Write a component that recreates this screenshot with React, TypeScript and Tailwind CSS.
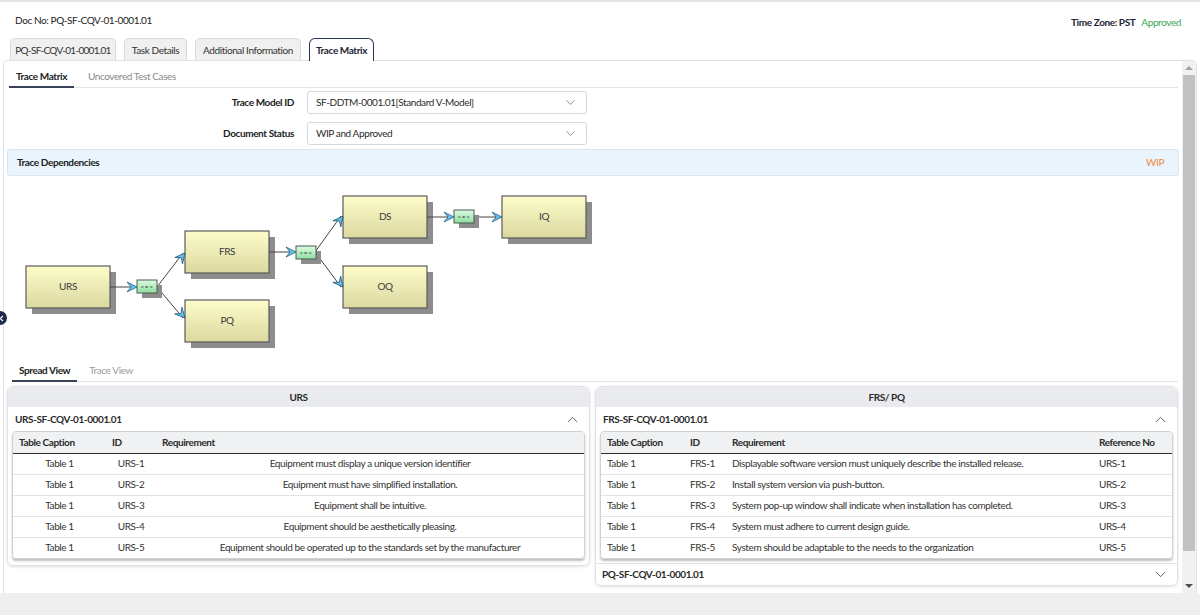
import React from 'react';
import { ChevronDown, ChevronUp, ChevronLeft } from 'lucide-react';

const font = { fontFamily: 'Lato, "Liberation Sans", sans-serif' };

const Arrow: React.FC<{ x1: number; y1: number; x2: number; y2: number }> = ({ x1, y1, x2, y2 }) => {
    const angle = (Math.atan2(y2 - y1, x2 - x1) * 180) / Math.PI;
    return (
        <g>
            <line x1={x1} y1={y1} x2={x2 - 2} y2={y2} stroke="#444" strokeWidth="1" />
            <polygon
                points={`${x2},${y2} ${x2 - 10},${y2 - 5} ${x2 - 6},${y2} ${x2 - 10},${y2 + 5}`}
                fill="#5ec4ee"
                stroke="#1f4e6e"
                strokeWidth="0.7"
                transform={`rotate(${angle} ${x2} ${y2})`}
            />
        </g>
    );
};

const Node: React.FC<{ x: number; y: number; label: string }> = ({ x, y, label }) => (
    <g>
        <rect x={x + 6} y={y + 6} width={84} height={42} fill="#8d8d8d" />
        <rect x={x} y={y} width={84} height={42} fill="url(#nodeFill)" stroke="#5b5b5b" strokeWidth="1.2" />
        <text x={x + 42} y={y + 24} textAnchor="middle" fontSize="10" fill="#3a3a3a" style={font}>
            {label}
        </text>
    </g>
);

const Link: React.FC<{ x: number; y: number }> = ({ x, y }) => (
    <g>
        <rect x={x + 5} y={y + 5} width={20} height={13} fill="#8d8d8d" />
        <rect x={x} y={y} width={20} height={13} fill="url(#linkFill)" stroke="#4b5b50" strokeWidth="1" />
        <text x={x + 10} y={y + 9} textAnchor="middle" fontSize="6.5" fill="#333" letterSpacing="0.6" style={font}>
            {'<=>'}
        </text>
    </g>
);

const TraceDiagram = () => (
    <svg width="600" height="184" viewBox="4 176 600 184" className="block">
        <defs>
            <linearGradient id="nodeFill" x1="0" y1="0" x2="0" y2="1">
                <stop offset="0" stopColor="#fdfdcb" />
                <stop offset="1" stopColor="#dbd8a0" />
            </linearGradient>
            <linearGradient id="linkFill" x1="0" y1="0" x2="0" y2="1">
                <stop offset="0" stopColor="#dcfbe3" />
                <stop offset="1" stopColor="#8fdfa0" />
            </linearGradient>
        </defs>
        <Node x={26} y={266} label="URS" />
        <Node x={185} y={231} label="FRS" />
        <Node x={185} y={300} label="PQ" />
        <Node x={343} y={196} label="DS" />
        <Node x={343} y={266} label="OQ" />
        <Node x={502} y={196} label="IQ" />
        <Arrow x1={110} y1={287} x2={137} y2={287} />
        <Arrow x1={157} y1={287} x2={185} y2={253} />
        <Arrow x1={157} y1={287} x2={185} y2={318} />
        <Arrow x1={269} y1={252} x2={296} y2={252} />
        <Arrow x1={315} y1={252} x2={343} y2={216} />
        <Arrow x1={315} y1={252} x2={343} y2={287} />
        <Arrow x1={427} y1={217} x2={454} y2={217} />
        <Arrow x1={474} y1={217} x2={502} y2={217} />
        <Link x={137} y={280} />
        <Link x={296} y={246} />
        <Link x={454} y={210} />
    </svg>
);

const urs = [
    ['URS-1', 'Equipment must display a unique version identifier'],
    ['URS-2', 'Equipment must have simplified installation.'],
    ['URS-3', 'Equipment shall be intuitive.'],
    ['URS-4', 'Equipment should be aesthetically pleasing.'],
    ['URS-5', 'Equipment should be operated up to the standards set by the manufacturer'],
];

const frs = [
    ['FRS-1', 'Displayable software version must uniquely describe the installed release.', 'URS-1'],
    ['FRS-2', 'Install system version via push-button.', 'URS-2'],
    ['FRS-3', 'System pop-up window shall indicate when installation has completed.', 'URS-3'],
    ['FRS-4', 'System must adhere to current design guide.', 'URS-4'],
    ['FRS-5', 'System should be adaptable to the needs to the organization', 'URS-5'],
];

const PanelHeader: React.FC<{ title: string }> = ({ title }) => (
    <div className="h-[20px] bg-[#e9ebee] flex items-center justify-center font-bold text-[#2b2b2b] rounded-t-[6px]">{title}</div>
);

const SectionRow: React.FC<{ title: string; open?: boolean; bordered?: boolean }> = ({ title, open, bordered }) => (
    <div className={`flex items-center justify-between pr-[8px] ${bordered ? 'border-t border-[#e3e3e3] h-[22px] pl-[6px]' : 'h-[24px] pl-[7px]'}`}>
        <span className="font-bold text-[#2b2b2b]">{title}</span>
        {open ? <ChevronUp size={17} strokeWidth={1.2} className="text-[#444]" /> : <ChevronDown size={17} strokeWidth={1.2} className="text-[#444]" />}
    </div>
);

const UrsTable = () => (
    <div className="mx-[4px] border border-[#cfd2d6] rounded-[4px] shadow-[0_2px_2px_rgba(0,0,0,0.25)] overflow-hidden">
        <table className="w-full border-collapse table-fixed">
            <colgroup>
                <col className="w-[93px]" />
                <col className="w-[50px]" />
                <col />
            </colgroup>
            <thead>
                <tr className="h-[21px] bg-[#f0f1f3] border-b-[1.5px] border-[#2e2e2e] text-left font-bold text-[#2b2b2b]">
                    <th className="px-[6px] font-bold">Table Caption</th>
                    <th className="px-[6px] font-bold">ID</th>
                    <th className="px-[6px] font-bold">Requirement</th>
                </tr>
            </thead>
            <tbody>
                {urs.map(([id, req], i) => (
                    <tr key={id} className={`h-[21px] text-center ${i < urs.length - 1 ? 'border-b border-[#e1e3e6]' : ''}`}>
                        <td>Table 1</td>
                        <td>{id}</td>
                        <td>{req}</td>
                    </tr>
                ))}
            </tbody>
        </table>
    </div>
);

const FrsTable = () => (
    <div className="mx-[4px] border border-[#cfd2d6] rounded-[4px] shadow-[0_2px_2px_rgba(0,0,0,0.25)] overflow-hidden">
        <table className="w-full border-collapse table-fixed text-left">
            <colgroup>
                <col className="w-[83px]" />
                <col className="w-[42px]" />
                <col />
                <col className="w-[79px]" />
            </colgroup>
            <thead>
                <tr className="h-[21px] bg-[#f0f1f3] border-b-[1.5px] border-[#2e2e2e] font-bold text-[#2b2b2b]">
                    <th className="px-[6px] font-bold">Table Caption</th>
                    <th className="px-[6px] font-bold">ID</th>
                    <th className="px-[6px] font-bold">Requirement</th>
                    <th className="px-[6px] font-bold">Reference No</th>
                </tr>
            </thead>
            <tbody>
                {frs.map(([id, req, ref], i) => (
                    <tr key={id} className={`h-[21px] ${i < frs.length - 1 ? 'border-b border-[#e1e3e6]' : ''}`}>
                        <td className="px-[6px]">Table 1</td>
                        <td className="px-[6px]">{id}</td>
                        <td className="px-[6px] whitespace-nowrap">{req}</td>
                        <td className="px-[6px]">{ref}</td>
                    </tr>
                ))}
            </tbody>
        </table>
    </div>
);

const SelectBox: React.FC<{ value: string }> = ({ value }) => (
    <div className="w-[280px] h-[23px] border border-[#d5d8dc] rounded-[3px] flex items-center justify-between pl-[8px] pr-[8px] bg-white">
        <span className="text-[#2b2b2b]">{value}</span>
        <ChevronDown size={15} strokeWidth={1.2} className="text-[#666]" />
    </div>
);

const tabs = [
    { label: 'PQ-SF-CQV-01-0001.01', w: 'w-[106px] tracking-[-0.7px]' },
    { label: 'Task Details', w: 'w-[63px]' },
    { label: 'Additional Information', w: 'w-[106px]' },
];

export default function App() {
    return (
        <div className="w-[1200px] h-[615px] overflow-hidden bg-white flex flex-col relative text-[10px] tracking-[-0.4px] text-[#333]" style={font}>
            <div className="h-[2px] bg-[#e6e6e6]" />
            <div className="h-[36px] flex items-start justify-between pl-[15px] pr-[19px] pt-[11px]">
                <span className="text-[#222]">Doc No: PQ-SF-CQV-01-0001.01</span>
                <div className="flex gap-[6px] pt-[2px]">
                    <span className="font-bold text-[#1d2433]">Time Zone: PST</span>
                    <span className="text-[#3aa655]">Approved</span>
                </div>
            </div>
            <div className="h-[22px] flex items-end gap-[8px] pl-[10px] relative z-10">
                {tabs.map(t => (
                    <div key={t.label} className={`${t.w} h-[22px] pt-[1px] flex items-center justify-center whitespace-nowrap bg-[#f0f0f0] border border-b-0 border-[#dadada] rounded-t-[5px] text-[#333]`}>
                        {t.label}
                    </div>
                ))}
                <div className="w-[65px] h-[23px] flex items-center justify-center bg-white border-[1.5px] border-b-0 border-[#27365a] rounded-t-[6px] font-bold text-[#1f2433] mb-[-1px]">
                    Trace Matrix
                </div>
            </div>
            <div className="flex-1 min-h-0 mx-[3px] border border-b-0 border-[#e2e2e2] rounded-t-[5px] flex">
                <div className="flex-1 min-w-0 flex flex-col">
                    <div className="h-[27px] flex items-end ml-[5px] mr-[4px] border-b border-[#e4e4e4] gap-[14px]">
                        <div className="h-[22px] px-[7px] flex items-center border-b-2 border-[#3a4356] font-bold text-[#222] mb-[-1px]">Trace Matrix</div>
                        <div className="h-[22px] flex items-center text-[#8a8a8a]">Uncovered Test Cases</div>
                    </div>
                    <div className="flex flex-col gap-[8px] mt-[3px]">
                        <div className="flex items-center">
                            <div className="w-[290px] text-right font-bold text-[#222]">Trace Model ID</div>
                            <div className="ml-[13px]"><SelectBox value="SF-DDTM-0001.01[Standard V-Model]" /></div>
                        </div>
                        <div className="flex items-center">
                            <div className="w-[290px] text-right font-bold text-[#222]">Document Status</div>
                            <div className="ml-[13px]"><SelectBox value="WIP and Approved" /></div>
                        </div>
                    </div>
                    <div className="mt-[4px] mx-[3px] h-[27px] bg-[#eaf4fd] border border-[#dde6ee] rounded-[3px] flex items-center justify-between pl-[9px] pr-[14px]">
                        <span className="font-bold text-[#222]">Trace Dependencies</span>
                        <span className="text-[#f08a3e]">WIP</span>
                    </div>
                    <TraceDiagram />
                    <div className="h-[22px] flex items-end ml-[8px] mr-[4px] border-b border-[#e4e4e4] gap-[12px]">
                        <div className="h-[21px] px-[7px] flex items-center border-b-2 border-[#3a4356] font-bold text-[#222] mb-[-1px]">Spread View</div>
                        <div className="h-[21px] flex items-center text-[#9a9a9a]">Trace View</div>
                    </div>
                    <div className="flex items-start gap-[5px] mt-[4px] pl-[3px] pr-[4px]">
                        <div className="w-[583px] border border-[#e0e2e5] rounded-[6px] shadow-[0_1px_3px_rgba(0,0,0,0.12)] pb-[6px]">
                            <PanelHeader title="URS" />
                            <SectionRow title="URS-SF-CQV-01-0001.01" open />
                            <UrsTable />
                        </div>
                        <div className="flex-1 border border-[#e0e2e5] rounded-[6px] shadow-[0_1px_3px_rgba(0,0,0,0.12)]">
                            <PanelHeader title="FRS/ PQ" />
                            <SectionRow title="FRS-SF-CQV-01-0001.01" open />
                            <FrsTable />
                            <div className="h-[4px]" />
                            <SectionRow title="PQ-SF-CQV-01-0001.01" bordered />
                        </div>
                    </div>
                </div>
                <div className="w-[14px] bg-[#f1f1f1] flex flex-col items-center">
                    <div className="h-[14px] flex items-center justify-center">
                        <div className="w-0 h-0 border-l-[4px] border-r-[4px] border-b-[4px] border-l-transparent border-r-transparent border-b-[#a3a3a3]" />
                    </div>
                    <div className="w-[12px] h-[476px] bg-[#c1c1c1]" />
                    <div className="flex-1" />
                    <div className="h-[14px] flex items-center justify-center">
                        <div className="w-0 h-0 border-l-[4px] border-r-[4px] border-t-[4px] border-l-transparent border-r-transparent border-t-[#505050]" />
                    </div>
                </div>
            </div>
            <div className="h-[22px] bg-[#efefef] shrink-0" />
            <div className="absolute left-[-7px] top-[311px] w-[14px] h-[14px] rounded-full bg-[#1e2a4a] flex items-center justify-end pr-[1px]">
                <ChevronLeft size={9} strokeWidth={3} className="text-white" />
            </div>
        </div>
    );
}
